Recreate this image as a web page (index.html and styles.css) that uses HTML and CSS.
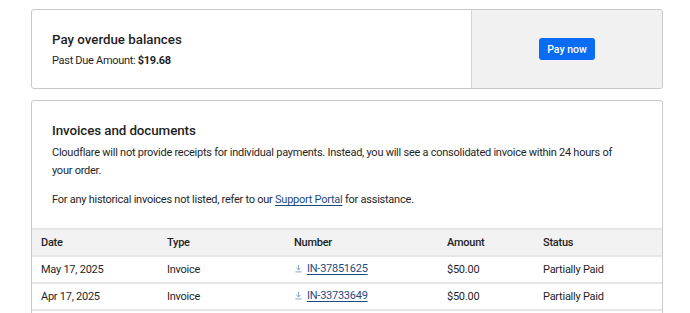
FILE: index.html
```html
<!DOCTYPE html>
<html lang="en">
<head>
  <meta charset="UTF-8" />
  <title>Billing</title>
  <link rel="stylesheet" href="styles.css">
</head>
<body>

  <div class="card overdue">
    <div class="overdue-info">
      <h2>Pay overdue balances</h2>
      <p>Past Due Amount: <strong>$19.68</strong></p>
    </div>
    <div class="overdue-action">
      <button class="btn-pay">Pay now</button>
    </div>
  </div>

  <div class="card invoices">
    <div class="invoices-intro">
      <h2>Invoices and documents</h2>
      <p>Cloudflare will not provide receipts for individual payments. Instead, you will see a consolidated invoice within 24 hours of your order.</p>
      <p>For any historical invoices not listed, refer to our <a href="#">Support Portal</a> for assistance.</p>
    </div>

    <table class="invoice-table">
      <thead>
        <tr>
          <th class="col-date">Date</th>
          <th class="col-type">Type</th>
          <th class="col-number">Number</th>
          <th class="col-amount">Amount</th>
          <th>Status</th>
        </tr>
      </thead>
      <tbody>
        <tr>
          <td>May 17, 2025</td>
          <td>Invoice</td>
          <td><a href="#" class="dl"><svg class="dl-icon" viewBox="0 0 10 10" width="9" height="9"><path d="M5 1v5.5M2.6 4.3 5 6.7l2.4-2.4M1.5 8.8h7" fill="none" stroke="currentColor" stroke-width="1"/></svg><span>IN-37851625</span></a></td>
          <td>$50.00</td>
          <td>Partially Paid</td>
        </tr>
        <tr>
          <td>Apr 17, 2025</td>
          <td>Invoice</td>
          <td><a href="#" class="dl"><svg class="dl-icon" viewBox="0 0 10 10" width="9" height="9"><path d="M5 1v5.5M2.6 4.3 5 6.7l2.4-2.4M1.5 8.8h7" fill="none" stroke="currentColor" stroke-width="1"/></svg><span>IN-33733649</span></a></td>
          <td>$50.00</td>
          <td>Partially Paid</td>
        </tr>
        <tr class="row-more">
          <td></td>
          <td></td>
          <td></td>
          <td></td>
          <td></td>
        </tr>
      </tbody>
    </table>
  </div>

</body>
</html>
```

FILE: styles.css
```css
body {
  margin: 0;
  padding: 9px 27px 0 31px;
  background: #fff;
  font-family: Roboto, "Noto Sans", sans-serif;
  color: #1f1f1f;
  overflow: hidden;
}

.card {
  width: 632px;
  box-sizing: border-box;
  border: 1px solid #c9c9c9;
  border-radius: 3px;
  background: white;
  overflow: hidden;
}

.overdue {
  display: flex;
  height: 80px;
}

.overdue-info {
  flex: 1;
  padding: 20px 20px 0 20px;
}

.overdue-info h2 {
  margin: 0;
  font-size: 13.3px;
  font-weight: 500;
  line-height: 20px;
}

.overdue-info p {
  margin: 3px 0 0;
  font-size: 11px;
  line-height: 16px;
  letter-spacing: -0.3px;
}

.overdue-action {
  width: 190px;
  background: #f1f1f1;
  border-left: 1px solid #d4d4d4;
  display: flex;
  align-items: center;
  justify-content: center;
}

.btn-pay {
  background: #0a6cf2;
  color: white;
  border: none;
  border-radius: 3px;
  width: 56px;
  height: 22px;
  padding: 0;
  font-family: inherit;
  font-size: 10.5px;
  font-weight: 500;
  cursor: pointer;
}

.invoices {
  margin-top: 11px;
}

.invoices-intro {
  padding: 20px 40px 19px 20px;
}

.invoices-intro h2 {
  margin: 0 0 3px;
  font-size: 13.4px;
  font-weight: 500;
  line-height: 20px;
  letter-spacing: -0.1px;
}

.invoices-intro p {
  margin: 0 0 12px;
  font-size: 11px;
  line-height: 17.5px;
  letter-spacing: -0.25px;
}

.invoices-intro p:last-child {
  margin-bottom: 0;
}

.invoices-intro a {
  color: #1f4a7c;
  text-decoration: underline;
  text-underline-offset: 2px;
}

.invoice-table {
  width: 100%;
  border-collapse: collapse;
  font-size: 11px;
  letter-spacing: -0.25px;
}

.invoice-table th,
.invoice-table td {
  text-align: left;
  padding: 0 9px;
  height: 25px;
  border-top: 2px solid #e6e6e6;
}

.invoice-table th {
  background: #f2f2f2;
  font-weight: 500;
  border-bottom: 1px solid #dedede;
}

.col-date { width: 108px; }
.col-type { width: 109px; }
.col-number { width: 135px; }
.col-amount { width: 78px; }

.dl {
  color: #1f4a7c;
  text-decoration: none;
  display: inline-flex;
  align-items: center;
  gap: 4px;
}

.dl span {
  text-decoration: underline;
  text-underline-offset: 2px;
}

.dl-icon {
  color: #7a9cc4;
}
```
